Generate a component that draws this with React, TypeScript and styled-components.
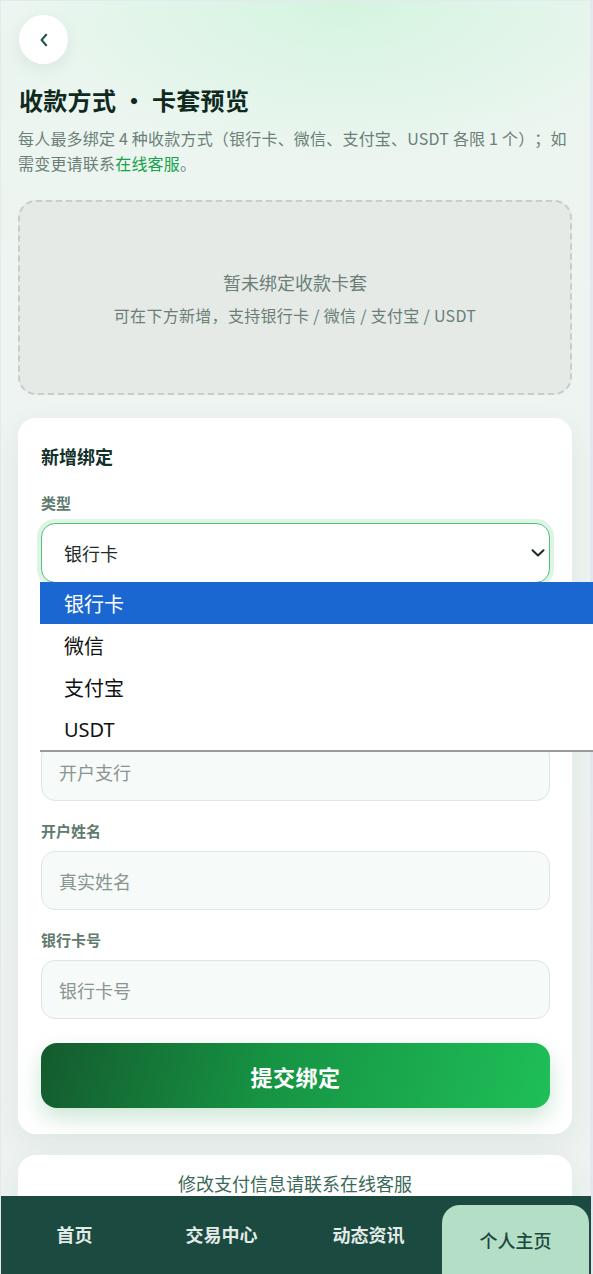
import React from "react";
import styled, { createGlobalStyle } from "styled-components";

const GlobalStyle = createGlobalStyle`
  * { box-sizing: border-box; }
  html, body { margin: 0; padding: 0; overflow: hidden; }
  body {
    background: #e3e9ef;
    font-family: "Noto Sans CJK SC", "Noto Sans", sans-serif;
    text-spacing-trim: space-all;
  }
`;

const Shell = styled.div`
  position: relative;
  width: 589px;
  height: 1273px;
  margin: 1px 0 0 1px;
  padding: 14px 18px 0 17px;
  background:
    radial-gradient(ellipse 320px 160px at 58% 0%, rgba(210, 244, 222, 0.9) 0%, rgba(210, 244, 222, 0) 100%),
    linear-gradient(180deg, #eaf6ef 0%, #eef4f1 22%, #eef3f1 100%);
`;

const BackButton = styled.button`
  width: 49px;
  height: 49px;
  border-radius: 50%;
  border: none;
  background: #ffffff;
  box-shadow: 0 6px 18px rgba(30, 70, 50, 0.08);
  display: flex;
  align-items: center;
  justify-content: center;
  padding: 0;
  margin-left: 1px;
  color: #1f5a4a;
`;

const Title = styled.h1`
  margin: 20px 0 0 1px;
  font-size: 24px;
  line-height: 32px;
  font-weight: 700;
  color: #10291f;
  letter-spacing: 0.3px;
`;

const Desc = styled.p`
  margin: 10px 0 0 0;
  font-size: 16px;
  line-height: 25px;
  letter-spacing: 0.2px;
  color: #6b7f77;
`;

const Link = styled.span`
  color: #16a34a;
`;

const EmptyBox = styled.div`
  margin-top: 24px;
  height: 195px;
  border: 2px dashed #c6cdca;
  border-radius: 18px;
  background: #e5eae7;
  display: flex;
  flex-direction: column;
  align-items: center;
  justify-content: center;
  gap: 8px;
`;

const EmptyMain = styled.div`
  font-size: 18px;
  line-height: 26px;
  color: #6b7f77;
`;

const EmptySub = styled.div`
  font-size: 16px;
  line-height: 24px;
  letter-spacing: 0.3px;
  color: #6b7f77;
`;

const Card = styled.section`
  margin-top: 23px;
  background: #ffffff;
  border-radius: 18px;
  padding: 25px 22px 26px 23px;
  box-shadow: 0 10px 30px rgba(30, 70, 50, 0.07);
`;

const CardTitle = styled.h2`
  margin: 0 0 24px 0;
  font-size: 18px;
  line-height: 26px;
  font-weight: 700;
  color: #12302a;
`;

const Fields = styled.div`
  display: flex;
  flex-direction: column;
  gap: 20px;
`;

const Field = styled.div`
  display: flex;
  flex-direction: column;
  gap: 10px;
  position: relative;
`;

const Label = styled.label`
  font-size: 15px;
  line-height: 20px;
  font-weight: 700;
  color: #5f7a6e;
`;

const SelectWrap = styled.div`
  position: relative;
`;

const Select = styled.select`
  appearance: none;
  width: 100%;
  height: 60px;
  border: 1px solid #4cc27b;
  border-radius: 14px;
  background: #ffffff;
  box-shadow: 0 0 0 4px #e0f3e7;
  padding: 0 40px 0 22px;
  font-family: "Noto Sans CJK SC", "Noto Sans", sans-serif;
  font-size: 18px;
  color: #1f2d28;
  outline: none;
`;

const Chevron = styled.svg`
  position: absolute;
  right: 5px;
  top: 26px;
  pointer-events: none;
`;

const Dropdown = styled.ul`
  position: absolute;
  left: -1px;
  top: 59px;
  width: 553px;
  margin: 0;
  padding: 0;
  list-style: none;
  background: #ffffff;
  box-shadow: 0 2px 0 0 #9a9a9a;
  z-index: 5;
`;

const Option = styled.li<{ $active?: boolean }>`
  height: 42px;
  display: flex;
  align-items: center;
  padding-left: 24px;
  font-family: "Noto Sans", "Noto Sans CJK SC", sans-serif;
  font-size: 20px;
  color: ${(p) => (p.$active ? "#ffffff" : "#111111")};
  background: ${(p) => (p.$active ? "#1a67d2" : "transparent")};
`;

const Input = styled.input`
  width: 100%;
  height: 59px;
  border: 1px solid #dde6e2;
  border-radius: 14px;
  background: #f6faf8;
  padding: 0 17px;
  font-family: "Noto Sans CJK SC", "Noto Sans", sans-serif;
  font-size: 18px;
  color: #1f2d28;
  outline: none;
  &::placeholder { color: #8a9590; }
`;

const Submit = styled.button`
  margin-top: 24px;
  width: 100%;
  height: 65px;
  border: none;
  border-radius: 16px;
  background: linear-gradient(105deg, #145a2e 0%, #169443 45%, #1fbf58 100%);
  box-shadow: 0 10px 22px rgba(22, 140, 70, 0.22);
  color: #ffffff;
  font-family: "Noto Sans CJK SC", "Noto Sans", sans-serif;
  font-size: 22px;
  font-weight: 700;
  letter-spacing: 0.5px;
`;

const NoteCard = styled.section`
  margin-top: 21px;
  background: #ffffff;
  border-radius: 18px;
  padding: 15px 20px 40px;
  text-align: center;
  box-shadow: 0 10px 30px rgba(30, 70, 50, 0.07);
`;

const NoteText = styled.div`
  font-size: 18px;
  line-height: 26px;
  color: #3c6a58;
`;

const Nav = styled.nav`
  position: fixed;
  left: 1px;
  bottom: 0;
  width: 590px;
  height: 78px;
  background: #1b4a40;
  display: grid;
  grid-template-columns: repeat(4, 1fr);
  align-items: end;
  padding-right: 2px;
  z-index: 10;
`;

const Tab = styled.div<{ $active?: boolean }>`
  height: ${(p) => (p.$active ? "69px" : "78px")};
  display: flex;
  align-items: center;
  justify-content: center;
  padding-bottom: ${(p) => (p.$active ? "0" : "2px")};
  font-size: 18px;
  font-weight: ${(p) => (p.$active ? 500 : 700)};
  color: ${(p) => (p.$active ? "#1b4a40" : "#e3ebe7")};
  background: ${(p) => (p.$active ? "#b4dfc6" : "transparent")};
  border-radius: ${(p) => (p.$active ? "18px 18px 0 0" : "0")};
`;

export default function App() {
  return (
    <>
      <GlobalStyle />
      <Shell>
        <BackButton aria-label="返回">
          <svg width="10" height="14" viewBox="0 0 10 14" fill="none">
            <path d="M7.2 1.8 L2.6 7 L7.2 12.2" stroke="currentColor" strokeWidth="2.1" strokeLinecap="round" strokeLinejoin="round" />
          </svg>
        </BackButton>
        <Title>收款方式 · 卡套预览</Title>
        <Desc>
          每人最多绑定 4 种收款方式（银行卡、微信、支付宝、USDT 各限 1 个）；如需变更请联系<Link>在线客服</Link>。
        </Desc>
        <EmptyBox>
          <EmptyMain>暂未绑定收款卡套</EmptyMain>
          <EmptySub>可在下方新增，支持银行卡 / 微信 / 支付宝 / USDT</EmptySub>
        </EmptyBox>
        <Card>
          <CardTitle>新增绑定</CardTitle>
          <Fields>
            <Field>
              <Label>类型</Label>
              <SelectWrap>
                <Select defaultValue="bank">
                  <option value="bank">银行卡</option>
                  <option value="wechat">微信</option>
                  <option value="alipay">支付宝</option>
                  <option value="usdt">USDT</option>
                </Select>
                <Chevron width="14" height="8" viewBox="0 0 14 8" fill="none">
                  <path d="M1.5 1.2 L7 6.5 L12.5 1.2" stroke="#1f2a26" strokeWidth="2" strokeLinecap="round" strokeLinejoin="round" />
                </Chevron>
                <Dropdown>
                  <Option $active>银行卡</Option>
                  <Option>微信</Option>
                  <Option>支付宝</Option>
                  <Option>USDT</Option>
                </Dropdown>
              </SelectWrap>
            </Field>
            <Field>
              <Label>开户银行</Label>
              <Input placeholder="开户银行" />
            </Field>
            <Field>
              <Label>开户支行</Label>
              <Input placeholder="开户支行" />
            </Field>
            <Field>
              <Label>开户姓名</Label>
              <Input placeholder="真实姓名" />
            </Field>
            <Field>
              <Label>银行卡号</Label>
              <Input placeholder="银行卡号" />
            </Field>
          </Fields>
          <Submit>提交绑定</Submit>
        </Card>
        <NoteCard>
          <NoteText>修改支付信息请联系在线客服</NoteText>
        </NoteCard>
        <Nav>
          <Tab>首页</Tab>
          <Tab>交易中心</Tab>
          <Tab>动态资讯</Tab>
          <Tab $active>个人主页</Tab>
        </Nav>
      </Shell>
    </>
  );
}
